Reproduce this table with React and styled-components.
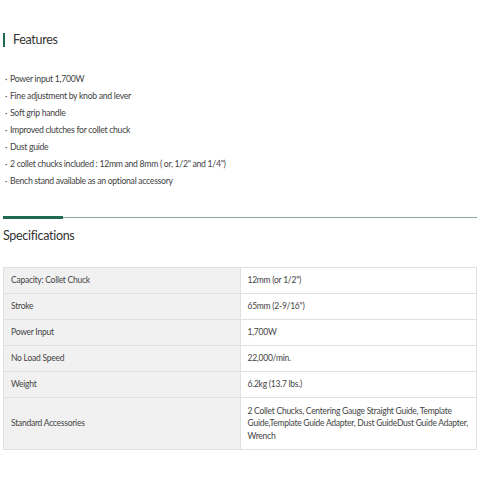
import React from "react";
import styled, { createGlobalStyle } from "styled-components";

const GlobalStyle = createGlobalStyle`
    html, body {
        margin: 0;
        padding: 0;
        background: #fff;
    }
    body {
        font-family: Lato, "Noto Sans", sans-serif;
        color: #444;
    }
`

const Page = styled.div`
    width: 480px;
    height: 480px;
    padding: 33px 3px 0 3px;
    box-sizing: border-box;
    overflow: hidden;
`

const FeatureTitle = styled.h3`
    margin: 0;
    padding-left: 8px;
    border-left: 2px solid #1e6b4f;
    font-size: 12.5px;
    font-weight: 400;
    letter-spacing: -0.3px;
    line-height: 14px;
    color: #333;
`

const FeatureList = styled.ul`
    list-style: none;
    margin: 23px 0 0 0;
    padding: 0 0 0 2px;
`

const FeatureItem = styled.li`
    font-size: 8.7px;
    letter-spacing: -0.3px;
    line-height: 17px;
    color: #3f3f3f;

    &::before {
        content: "·";
        margin-right: 3px;
    }
`

const Divider = styled.div`
    position: relative;
    margin-top: 28px;
    height: 1px;
    width: 474px;
    background: #8aa89a;

    &::before {
        content: "";
        position: absolute;
        left: 0;
        top: -1px;
        width: 60px;
        height: 3px;
        background: #1e6b4f;
    }
`

const SpecTitle = styled.h3`
    margin: 9px 0 0 0;
    font-size: 12.5px;
    font-weight: 400;
    letter-spacing: -0.3px;
    line-height: 18px;
    color: #333;
`

const SpecTable = styled.table`
    margin-top: 22px;
    width: 474px;
    border-collapse: collapse;
    font-size: 8.5px;
    letter-spacing: -0.25px;
    color: #444;
`

const Cell = styled.td`
    border: 1px solid #e0e0e0;
    padding: 4px 7px;
    height: ${p => p.$tall ? 43 : 17}px;
    line-height: 12.5px;
    width: 50%;
    background: ${p => p.$head ? "#f1f1f1" : "#fff"};
    vertical-align: middle;
`

const specs = [
    ["Capacity: Collet Chuck", "12mm (or 1/2\")"],
    ["Stroke", "65mm (2-9/16\")"],
    ["Power Input", "1,700W"],
    ["No Load Speed", "22,000/min."],
    ["Weight", "6.2kg (13.7 lbs.)"],
    ["Standard Accessories", "2 Collet Chucks, Centering Gauge Straight Guide, Template Guide,Template Guide Adapter, Dust GuideDust Guide Adapter, Wrench"],
];

const features = [
    "Power input 1,700W",
    "Fine adjustment by knob and lever",
    "Soft grip handle",
    "Improved clutches for collet chuck",
    "Dust guide",
    "2 collet chucks included : 12mm and 8mm ( or, 1/2\" and 1/4\")",
    "Bench stand available as an optional accessory",
];

export default function App() {
    return (
        <Page>
            <GlobalStyle />
            <FeatureTitle>Features</FeatureTitle>
            <FeatureList>
                {features.map(f => <FeatureItem key={f}>{f}</FeatureItem>)}
            </FeatureList>

            <Divider />
            <SpecTitle>Specifications</SpecTitle>

            <SpecTable>
                <tbody>
                    {specs.map(([k, v], i) => (
                        <tr key={k}>
                            <Cell $head $tall={i === specs.length - 1}>{k}</Cell>
                            <Cell $tall={i === specs.length - 1}>{v}</Cell>
                        </tr>
                    ))}
                </tbody>
            </SpecTable>
        </Page>
    );
}
